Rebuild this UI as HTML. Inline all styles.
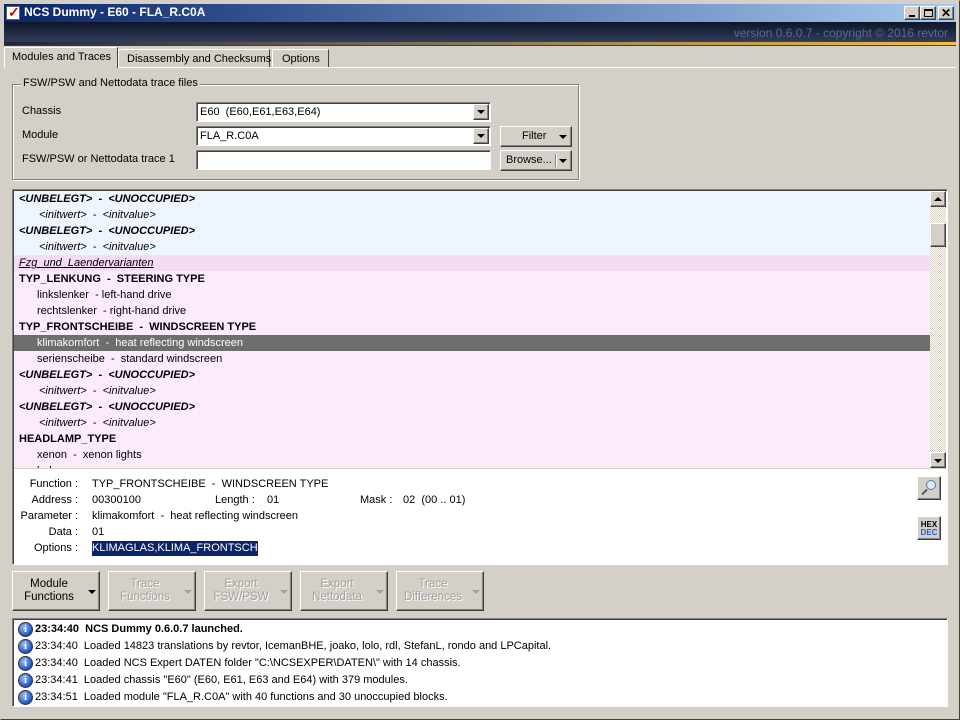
<!DOCTYPE html>
<html><head><meta charset="utf-8"><style>
*{box-sizing:border-box;margin:0;padding:0}
body{width:960px;height:720px;background:#d4d0c8;font-family:"Liberation Sans",sans-serif;font-size:11px;color:#000;position:relative;overflow:hidden}
.a{position:absolute;white-space:nowrap}
.raised{background:#d4d0c8;border:1px solid;border-color:#fff #404040 #404040 #fff;box-shadow:inset -1px -1px 0 #808080}
.sunk{border:1px solid;border-color:#808080 #fff #fff #808080;box-shadow:inset 1px 1px 0 #404040}
.tri{position:absolute;width:0;height:0;border-left:4px solid transparent;border-right:4px solid transparent;border-top:4px solid #000}
.row{position:absolute;left:0;width:916px;height:16px;line-height:16px;white-space:pre}
.b{font-weight:bold}
.bi{font-weight:bold;font-style:italic}
.i{font-style:italic}
.lbl{position:absolute;width:68px;text-align:right}
.log{position:absolute;left:4px;height:17px;line-height:17px;white-space:pre;display:flex;align-items:center}
.ic{display:inline-block;flex:none;width:15px;height:15px;border-radius:50%;background:radial-gradient(circle at 40% 35%,#9cc2ff,#1f4fc0 70%);border:1px solid #334;color:#fff;font:bold 10px "Liberation Serif",serif;text-align:center;line-height:13px;margin-right:2px}
.btn{position:absolute;top:571px;height:40px;width:88px;text-align:center;padding-top:6px;line-height:13px;font-size:11.5px}
.dis{color:#a0a0a0;text-shadow:1px 1px 0 #fff}
</style></head><body>
<div class="a" style="left:0;top:0;width:960px;height:720px;border:1px solid;border-color:#d4d0c8 #404040 #404040 #d4d0c8"></div>
<div class="a" style="left:4px;top:4px;width:952px;height:18px;background:linear-gradient(90deg,#0a246a,#a6caf0)"></div>
<div class="a" style="left:6px;top:6px;width:14px;height:14px;background:#fff;border:1px solid #666"><div class="a" style="left:1px;top:-3px;color:#d00;font:bold 14px sans-serif">✓</div></div>
<div class="a" style="left:24px;top:5px;color:#fff;font-weight:bold;font-size:12px">NCS Dummy - E60 - FLA_R.C0A</div>
<div class="a raised" style="left:904px;top:6px;width:16px;height:14px"><div class="a" style="left:4px;top:8px;width:6px;height:2px;background:#000"></div></div>
<div class="a raised" style="left:920px;top:6px;width:16px;height:14px"><div class="a" style="left:3px;top:2px;width:9px;height:8px;border:1px solid #000;border-top-width:2px"></div></div>
<div class="a raised" style="left:938px;top:6px;width:16px;height:14px;font-size:12px;line-height:12px;text-align:center;font-weight:bold">✕</div>
<div class="a" style="left:4px;top:22px;width:952px;height:20px;background:linear-gradient(180deg,#0e1528,#323d5c)"></div>
<div class="a" style="left:4px;top:42px;width:952px;height:4px;background:linear-gradient(90deg,#1e2540,#8a7a5a 50%,#f5c030);border-bottom:1px solid #27407a"></div>
<div class="a" style="right:12px;top:26px;color:#5a6a90;font-size:12px">version 0.6.0.7 - copyright © 2016 revtor</div>
<div class="a" style="left:4px;top:67px;width:952px;height:1px;background:#fff"></div>
<div class="a" style="left:4px;top:47px;width:114px;height:21px;background:#d4d0c8;border-top:1px solid #fff;border-left:1px solid #fff;border-right:1px solid #404040;padding:3px 0 0 7px">Modules and Traces</div>
<div class="a" style="left:118px;top:49px;width:152px;height:18px;border-top:1px solid #fff;border-left:1px solid #fff;border-right:1px solid #404040;padding:3px 0 0 8px">Disassembly and Checksums</div>
<div class="a" style="left:272px;top:49px;width:57px;height:18px;border-top:1px solid #fff;border-left:1px solid #fff;border-right:1px solid #404040;padding:3px 0 0 9px">Options</div>
<div class="a" style="left:12px;top:84px;width:567px;height:96px;border:1px solid #808080;box-shadow:1px 1px 0 #fff,inset 1px 1px 0 #fff"></div>
<div class="a" style="left:21px;top:77px;background:#d4d0c8;padding:0 2px">FSW/PSW and Nettodata trace files</div>
<div class="a" style="left:22px;top:105px">Chassis</div>
<div class="a" style="left:22px;top:129px">Module</div>
<div class="a" style="left:22px;top:153px">FSW/PSW or Nettodata trace 1</div>
<div class="a sunk" style="left:196px;top:102px;width:295px;height:20px;background:#fff;padding:3px 0 0 3px">E60&nbsp; (E60,E61,E63,E64)<div class="a raised" style="right:1px;top:1px;width:16px;height:16px"><div class="tri" style="left:3px;top:5px"></div></div></div>
<div class="a sunk" style="left:196px;top:126px;width:295px;height:20px;background:#fff;padding:3px 0 0 3px">FLA_R.C0A<div class="a raised" style="right:1px;top:1px;width:16px;height:16px"><div class="tri" style="left:3px;top:5px"></div></div></div>
<div class="a sunk" style="left:196px;top:150px;width:295px;height:20px;background:#fff"></div>
<div class="a raised" style="left:500px;top:126px;width:72px;height:21px;padding:3px 0 0 21px">Filter<div class="tri" style="left:58px;top:8px"></div></div>
<div class="a raised" style="left:500px;top:150px;width:72px;height:21px;padding:3px 0 0 5px">Browse...<div class="a" style="left:54px;top:3px;width:1px;height:13px;background:#808080;box-shadow:1px 0 0 #fff"></div><div class="tri" style="left:58px;top:8px"></div></div>
<div class="a sunk" style="left:12px;top:189px;width:936px;height:376px;background:#fff"></div>
<div class="a" style="left:14px;top:191px;width:916px;height:277px;overflow:hidden">
<div class="a" style="left:0;top:0;width:916px;height:64px;background:#eef5ff"></div>
<div class="a" style="left:0;top:64px;width:916px;height:220px;background:#fbebfb"></div>
<div class="row bi" style="top:0;padding-left:5px">&lt;UNBELEGT&gt;  -  &lt;UNOCCUPIED&gt;</div>
<div class="row i" style="top:16px;padding-left:25px">&lt;initwert&gt;  -  &lt;initvalue&gt;</div>
<div class="row bi" style="top:32px;padding-left:5px">&lt;UNBELEGT&gt;  -  &lt;UNOCCUPIED&gt;</div>
<div class="row i" style="top:48px;padding-left:25px">&lt;initwert&gt;  -  &lt;initvalue&gt;</div>
<div class="row i" style="top:64px;padding-left:5px;background:#f5dcf5;text-decoration:underline">Fzg  und  Laendervarianten</div>
<div class="row b" style="top:80px;padding-left:5px">TYP_LENKUNG  -  STEERING TYPE</div>
<div class="row" style="top:96px;padding-left:23px">linkslenker  - left-hand drive</div>
<div class="row" style="top:112px;padding-left:23px">rechtslenker  - right-hand drive</div>
<div class="row b" style="top:128px;padding-left:5px">TYP_FRONTSCHEIBE  -  WINDSCREEN TYPE</div>
<div class="row" style="top:144px;padding-left:23px;background:#6e6e6e;color:#fff">klimakomfort  -  heat reflecting windscreen</div>
<div class="row" style="top:160px;padding-left:23px">serienscheibe  -  standard windscreen</div>
<div class="row bi" style="top:176px;padding-left:5px">&lt;UNBELEGT&gt;  -  &lt;UNOCCUPIED&gt;</div>
<div class="row i" style="top:192px;padding-left:25px">&lt;initwert&gt;  -  &lt;initvalue&gt;</div>
<div class="row bi" style="top:208px;padding-left:5px">&lt;UNBELEGT&gt;  -  &lt;UNOCCUPIED&gt;</div>
<div class="row i" style="top:224px;padding-left:25px">&lt;initwert&gt;  -  &lt;initvalue&gt;</div>
<div class="row b" style="top:240px;padding-left:5px">HEADLAMP_TYPE</div>
<div class="row" style="top:256px;padding-left:23px">xenon  -  xenon lights</div>
<div class="row" style="top:272px;padding-left:23px">halogen</div>
</div>
<div class="a" style="left:930px;top:191px;width:16px;height:277px;background:repeating-conic-gradient(#d4d0c8 0 25%,#fff 0 50%) 0 0/2px 2px"></div>
<div class="a raised" style="left:930px;top:191px;width:16px;height:16px"><div class="a" style="left:3px;top:5px;border-left:4px solid transparent;border-right:4px solid transparent;border-bottom:4px solid #000"></div></div>
<div class="a raised" style="left:930px;top:223px;width:16px;height:24px"></div>
<div class="a raised" style="left:930px;top:452px;width:16px;height:16px"><div class="tri" style="left:3px;top:6px"></div></div>
<div class="a" style="left:14px;top:468px;width:932px;height:1px;background:#d4d0c8"></div>
<div class="lbl" style="left:10px;top:478px">Function :</div>
<div class="lbl" style="left:10px;top:494px">Address :</div>
<div class="lbl" style="left:10px;top:510px">Parameter :</div>
<div class="lbl" style="left:10px;top:526px">Data :</div>
<div class="lbl" style="left:10px;top:542px">Options :</div>
<div class="a" style="left:92px;top:478px;white-space:pre">TYP_FRONTSCHEIBE  -  WINDSCREEN TYPE</div>
<div class="a" style="left:92px;top:494px">00300100</div>
<div class="a" style="left:215px;top:494px">Length :</div>
<div class="a" style="left:267px;top:494px">01</div>
<div class="a" style="left:360px;top:494px">Mask :</div>
<div class="a" style="left:403px;top:494px">02&nbsp; (00 .. 01)</div>
<div class="a" style="left:92px;top:510px;white-space:pre">klimakomfort  -  heat reflecting windscreen</div>
<div class="a" style="left:92px;top:526px">01</div>
<div class="a" style="left:92px;top:541px;background:#0a246a;color:#fff;padding:1px 0;line-height:13px">KLIMAGLAS,KLIMA_FRONTSCH</div>
<div class="a raised" style="left:917px;top:476px;width:24px;height:24px"><div class="a" style="left:8px;top:3px;width:10px;height:10px;border-radius:50%;border:1.5px solid #5a7aa0;background:#d8e8f8"></div><div class="a" style="left:3px;top:14px;width:7px;height:2px;background:#555;transform:rotate(-45deg)"></div></div>
<div class="a raised" style="left:917px;top:516px;width:24px;height:24px;font-size:8px;font-weight:bold;text-align:center;line-height:8px;padding-top:4px">HEX<br><span style="color:#2060e0">DEC</span></div>
<div class="btn raised" style="left:12px;padding-right:14px">Module<br>Functions<div class="tri" style="left:75px;top:18px"></div></div>
<div class="btn raised dis" style="left:108px;padding-right:14px">Trace<br>Functions<div class="tri" style="left:75px;top:18px;border-top-color:#a0a0a0"></div></div>
<div class="btn raised dis" style="left:204px;padding-right:14px">Export<br>FSW/PSW<div class="tri" style="left:75px;top:18px;border-top-color:#a0a0a0"></div></div>
<div class="btn raised dis" style="left:300px;padding-right:14px">Export<br>Nettodata<div class="tri" style="left:75px;top:18px;border-top-color:#a0a0a0"></div></div>
<div class="btn raised dis" style="left:396px;padding-right:14px">Trace<br>Differences<div class="tri" style="left:75px;top:18px;border-top-color:#a0a0a0"></div></div>
<div class="a sunk" style="left:12px;top:618px;width:936px;height:89px;background:#fff">
<div class="log b" style="top:2px;left:5px"><span class="ic">i</span>23:34:40  NCS Dummy 0.6.0.7 launched.</div>
<div class="log" style="top:19px;left:5px"><span class="ic">i</span>23:34:40  Loaded 14823 translations by revtor, IcemanBHE, joako, lolo, rdl, StefanL, rondo and LPCapital.</div>
<div class="log" style="top:36px;left:5px"><span class="ic">i</span>23:34:40  Loaded NCS Expert DATEN folder "C:\NCSEXPER\DATEN\" with 14 chassis.</div>
<div class="log" style="top:53px;left:5px"><span class="ic">i</span>23:34:41  Loaded chassis "E60" (E60, E61, E63 and E64) with 379 modules.</div>
<div class="log" style="top:70px;left:5px"><span class="ic">i</span>23:34:51  Loaded module "FLA_R.C0A" with 40 functions and 30 unoccupied blocks.</div>
</div>
</body></html>
